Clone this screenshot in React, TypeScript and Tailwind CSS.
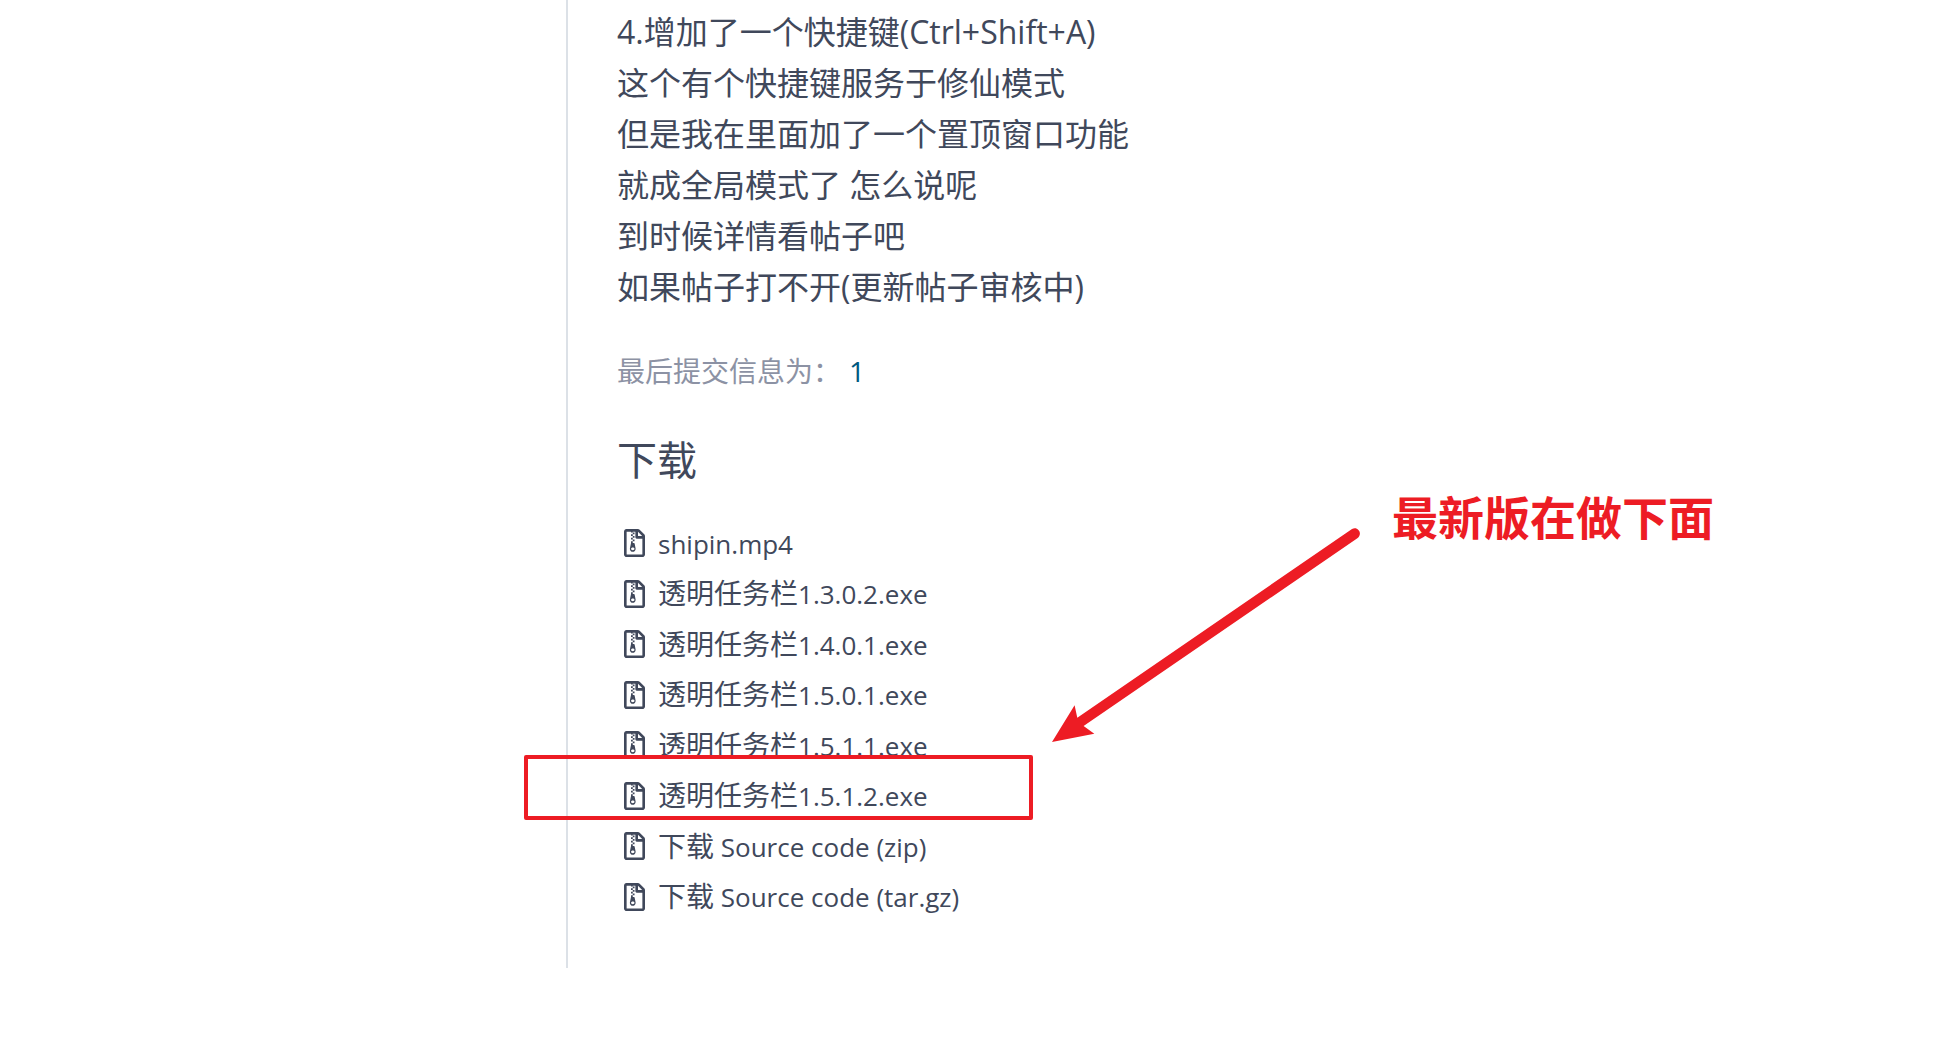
import React from "react";
import { FaRegFileArchive } from "react-icons/fa";

const notes = [
  "4.增加了一个快捷键(Ctrl+Shift+A)",
  "这个有个快捷键服务于修仙模式",
  "但是我在里面加了一个置顶窗口功能",
  "就成全局模式了 怎么说呢",
  "到时候详情看帖子吧",
  "如果帖子打不开(更新帖子审核中)",
];

const downloads = [
  { name: "shipin.mp4" },
  { name: "透明任务栏1.3.0.2.exe" },
  { name: "透明任务栏1.4.0.1.exe" },
  { name: "透明任务栏1.5.0.1.exe" },
  { name: "透明任务栏1.5.1.1.exe" },
  { name: "透明任务栏1.5.1.2.exe", highlighted: true },
  { name: "下载 Source code (zip)" },
  { name: "下载 Source code (tar.gz)" },
];

/** Sets runs of Latin text slightly smaller than the Chinese text round them. */
function FileName({ text }: { text: string }) {
  const runs = text.split(/([\x20-\x7e]+)/).filter(Boolean);
  return (
    <span className="whitespace-pre">
      {runs.map((run, i) =>
        /^[\x20-\x7e]/.test(run) ? (
          <span key={i} className="text-[26px]">
            {run}
          </span>
        ) : (
          run
        ),
      )}
    </span>
  );
}

function Arrow() {
  return (
    <svg
      className="absolute left-[1050px] top-[525px] h-[220px] w-[312px]"
      viewBox="1050 525 312 220"
      fill="#ed1c24"
      aria-hidden="true"
    >
      <path d="M1052 742 L1074.6 705.3 L1077.3 717.7 L1352 529 C1357 526 1362 532 1359 536.5 Q1358.500 537.500 1357 538.500 L1083.600 726 L1094.300 733.700 Z" />
    </svg>
  );
}

export default function App() {
  return (
    <div className="relative min-h-screen overflow-hidden bg-white font-['Open_Sans','Noto_Sans_CJK_SC',sans-serif] text-[#40485b]">
      <main className="ml-[566px] border-l-2 border-[#dce1e7] pt-[6px] pl-[49px] pb-[46px]">
        <div className="text-[32px] leading-[51px]">
          {notes.map((line) => (
            <p key={line}>{line}</p>
          ))}
        </div>
        <p className="mt-[34px] flex gap-2 text-[28px] leading-[50px] text-[#8c92a4]">
          <span>最后提交信息为：</span>
          <a href="#commit" className="text-[#005980]">
            1
          </a>
        </p>
        <h2 className="mt-[34px] text-[40px] leading-[60px]">下载</h2>
        <ul className="mt-[28px] text-[28px]">
          {downloads.map((file) => (
            <li key={file.name} className="relative flex items-center odd:h-[50px] even:h-[51px]">
              <a href="#download" className="flex items-center gap-[13px] pl-[7px] leading-[50px]">
                <FaRegFileArchive className="h-7 w-[21px] shrink-0" aria-hidden="true" />
                <FileName text={file.name} />
              </a>
              {file.highlighted && (
                <span className="pointer-events-none absolute -top-[15px] -left-[93px] h-[65px] w-[509px] rounded-xs border-4 border-[#ed1c24]" />
              )}
            </li>
          ))}
        </ul>
      </main>
      <Arrow />
      <p className="absolute left-[1392px] top-[485px] font-['Noto_Sans_CJK_SC',sans-serif] text-[46px] leading-[60px] font-bold whitespace-nowrap text-[#ed1c24]">
        最新版在做下面
      </p>
    </div>
  );
}
